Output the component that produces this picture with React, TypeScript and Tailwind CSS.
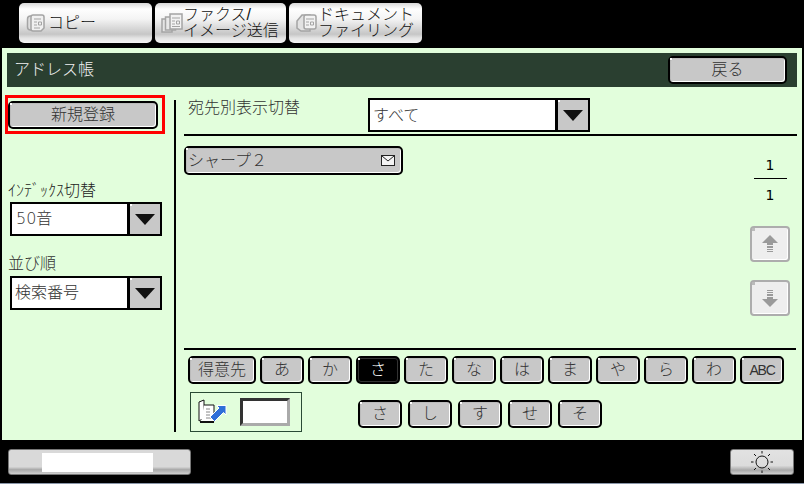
import React from 'react';

const font = "font-['Liberation_Sans','Noto_Sans_CJK_JP',sans-serif] font-light";

const row1 = ['あ', 'か', 'さ', 'た', 'な', 'は', 'ま', 'や', 'ら', 'わ'];
const row2 = ['さ', 'し', 'す', 'せ', 'そ'];

// raised grey button of the panel: black rim, white edge, small corner dot
const GreyButton: React.FC<{ className?: string; children?: React.ReactNode }> = ({ className, children }) => (
  <div className={`relative flex items-center justify-center rounded-[5px] border-2 border-black bg-[#c8c8c8] text-[#333] shadow-[inset_-1px_-1px_0_#fff,inset_1px_1px_0_#bbb] ${className ?? ''}`}>
    <span className="absolute left-0 top-0 h-[2px] w-[2px] bg-white" />
    {children}
  </div>
);

const Key: React.FC<{ label: string; active?: boolean; className?: string }> = ({ label, active, className }) => (
  <GreyButton className={`h-[28px] text-[16px] ${active ? '!bg-black !text-white !shadow-[inset_0_0_0_1px_#333]' : ''} ${className ?? 'w-[44px]'}`}>
    {label}
  </GreyButton>
);

const Dropdown: React.FC<{ label: string; className: string; arrowClass: string; textClass?: string }> = ({ label, className, arrowClass, textClass }) => (
  <div className={`flex border-2 border-black bg-white ${className}`}>
    <div className={`flex flex-1 items-center pl-[3px] text-[16px] text-[#333] ${textClass ?? ''}`}>{label}</div>
    <div className={`relative flex items-center justify-center border-l-[3px] border-black bg-[#c8c8c8] ${arrowClass}`}>
      <span className="absolute left-0 top-0 h-[2px] w-[2px] bg-white" />
      <svg width="20" height="12" viewBox="0 0 20 12"><polygon points="0,1 20,1 10,12" fill="#111" /></svg>
    </div>
  </div>
);

const ScrollButton: React.FC<{ down?: boolean }> = ({ down }) => (
  <div className="relative flex h-[36px] w-[40px] items-center justify-center rounded-[4px] border-2 border-[#adadad] bg-[#eeeeee] shadow-[inset_-1px_-1px_0_#fff]">
    <span className="absolute left-0 top-0 h-[3px] w-[3px] bg-[#bbb]" />
    <svg width="16" height="18" viewBox="0 0 16 18" className={down ? 'rotate-180' : ''}>
      <polygon points="8,0 16,8 11,8 11,10 5,10 5,8 0,8" fill="#9a9a9a" />
      <rect x="5" y="11" width="6" height="2" fill="#9a9a9a" />
      <rect x="5" y="14" width="6" height="1" fill="#9a9a9a" />
      <rect x="5" y="16" width="6" height="1" fill="#9a9a9a" />
    </svg>
  </div>
);

const TabIcon: React.FC<{ pages: number }> = ({ pages }) => (
  <svg width="22" height="20" viewBox="0 0 22 20" className="shrink-0" fill="none" stroke="#a4a4a4" strokeWidth="1.5">
    {pages === 1 && (
      <>
        <rect x="1.500" y="3" width="11" height="14" rx="3" fill="#dedede" />
        <path d="M7 2h9a2 2 0 0 1 2 2v11l-3 3H7a2 2 0 0 1-2-2V4a2 2 0 0 1 2-2z" fill="#f0f0f0" />
        <path d="M8 6h7M8 9h3M12.500 9h3v3h-3zM8 12h3M8 15h6" strokeWidth="1" />
      </>
    )}
    {pages === 2 && (
      <>
        <rect x="1" y="6" width="10" height="13" fill="#e4e4e4" />
        <rect x="4.500" y="4" width="10" height="13" fill="#e8e8e8" />
        <rect x="9" y="1" width="12" height="15" fill="#f2f2f2" />
        <path d="M11 5h8M11 8h3M15.500 8h3v3h-3zM11 11h3M11 13.500h8" strokeWidth="1" />
      </>
    )}
    {pages === 3 && (
      <>
        <path d="M1 8l5-6h8v16H5l-4-3z" fill="#e2e2e2" />
        <rect x="8" y="2" width="12" height="14" rx="2" fill="#f2f2f2" />
        <path d="M10 6h8M10 9h3M14.500 9h3v3h-3zM10 12h3" strokeWidth="1" />
      </>
    )}
  </svg>
);

const Tab: React.FC<{ lines: string[]; pages: number; className: string }> = ({ lines, pages, className }) => (
  <div className={`flex h-[40px] items-center rounded-[5px] bg-[linear-gradient(#d8d8d8_0%,#fefefe_15%,#f4f4f4_40%,#c6c6c6_78%,#e4e4e4_88%,#f4f4f4_100%)] text-[#111] ${className}`}>
    <TabIcon pages={pages} />
    <div className="text-[16px] leading-[16px]">
      {lines.map(l => <div key={l} className="whitespace-nowrap">{l}</div>)}
    </div>
  </div>
);

export default function App() {
  return (
    <div className={`relative flex h-[484px] w-[804px] flex-col overflow-hidden bg-black ${font}`}>
      {/* Top tabs */}
      <div className="flex h-[48px] shrink-0 gap-[3px] pl-[19px] pt-[3px]">
        <Tab lines={['コピー']} pages={1} className="w-[133px] pl-[7px]" />
        <Tab lines={['ファクス/', 'イメージ送信']} pages={2} className="w-[131px] pl-[6px]" />
        <Tab lines={['ドキュメント', 'ファイリング']} pages={3} className="w-[133px] pl-[7px]" />
      </div>

      {/* Main panel */}
      <div className="mx-[2px] flex h-[392px] shrink-0 flex-col bg-[#e2fedc] px-[5px] pt-[5px]">
        <div className="flex h-[34px] shrink-0 items-center justify-between bg-[#2a3f30] pl-[7px] pr-[10px]">
          <span className="text-[16px] text-[#f0f0f0]">アドレス帳</span>
          <GreyButton className="h-[28px] w-[119px] text-[16px]">戻る</GreyButton>
        </div>

        <div className="flex flex-1">
          {/* Left column */}
          <div className="flex w-[167px] shrink-0 flex-col">
            <div className="ml-[-2px] mt-[8px] flex h-[39px] w-[160px] items-center border-[3px] border-[#ff0000]">
              <GreyButton className="h-[28px] w-[150px] text-[16px]">新規登録</GreyButton>
            </div>
            <div className="ml-[1px] mt-[46px] h-[22px] text-[16px] leading-[22px] text-[#222]">ｲﾝﾃﾞｯｸｽ切替</div>
            <Dropdown label="50音" className="ml-[3px] h-[34px] w-[152px] font-['DejaVu_Sans','Noto_Sans_CJK_JP',sans-serif]" arrowClass="w-[33px]" textClass="pl-[4px]" />
            <div className="ml-[1px] mt-[16px] h-[24px] text-[16px] leading-[24px] text-[#333]">並び順</div>
            <Dropdown label="検索番号" className="ml-[3px] h-[34px] w-[152px]" arrowClass="w-[33px]" />
          </div>

          {/* Divider */}
          <div className="mt-[13px] h-[332px] w-[2px] shrink-0 bg-black" />

          {/* Right column */}
          <div className="ml-[8px] flex flex-1 flex-col">
            <div className="flex h-[49px] shrink-0 items-start border-b-2 border-black pt-[11px]">
              <div className="ml-[4px] w-[180px] text-[16px] leading-[20px] text-[#333]">宛先別表示切替</div>
              <Dropdown label="すべて" className="h-[34px] w-[222px]" arrowClass="w-[33px]" textClass="pt-[2px]" />
            </div>

            <div className="flex h-[212px] shrink-0 justify-between pr-[7px]">
              <GreyButton className="mt-[10px] h-[29px] w-[219px] !justify-between pl-[2px] pr-[6px] text-[16px]">
                <span>シャープ２</span>
                <svg width="14" height="11" viewBox="0 0 14 11" className="shrink-0">
                  <rect x="0.5" y="0.5" width="13" height="10" fill="#f4f4f4" stroke="#222" />
                  <path d="M1 1l6 5 6-5" fill="none" stroke="#222" />
                </svg>
              </GreyButton>
              <div className="flex w-[40px] flex-col items-center font-['DejaVu_Sans',sans-serif] font-normal">
                <div className="mt-[21px] text-[14px] leading-[16px] text-black">1</div>
                <div className="mt-[5px] h-[1px] w-[33px] bg-black" />
                <div className="mt-[8px] text-[14px] leading-[16px] text-black">1</div>
                <div className="mt-[23px]"><ScrollButton /></div>
                <div className="mt-[18px]"><ScrollButton down /></div>
              </div>
            </div>

            <div className="h-[2px] w-[612px] shrink-0 bg-black" />

            <div className="ml-[4px] mt-[6px] flex gap-[4px]">
              <Key label="得意先" className="w-[68px]" />
              {row1.map(k => <Key key={k} label={k} active={k === 'さ'} />)}
              <Key label="ABC" className="w-[44px] !text-[14px] tracking-[-1.2px]" />
            </div>

            <div className="ml-[6px] mt-[8px] flex items-start">
              <div className="flex h-[40px] w-[112px] items-center border border-[#2a4a35] pl-[6px]">
                <svg width="30" height="26" viewBox="0 0 30 26" className="shrink-0">
                  <path d="M2 3l5-2v18l-5 3z" fill="#fff" stroke="#111" />
                  <path d="M7 6h10v17H4" fill="#fff" stroke="#111" />
                  <path d="M3 23h14" stroke="#111" strokeWidth="2" />
                  <path d="M9 10h4M9 13h4M9 16h4M9 19h6" stroke="#888" />
                  <path d="M13 18l9-9-2.500-2.500H29V16l-2.500-2.500-9 9z" fill="#2f6fd8" stroke="#fff" />
                </svg>
                <div className="ml-[13px] h-[28px] w-[50px] border-[3px] border-b-[#aaa] border-l-[#333] border-r-[#aaa] border-t-[#333] bg-white" />
              </div>
              <div className="ml-[56px] mt-[8px] flex gap-[6px]">
                {row2.map(k => <Key key={k} label={k} />)}
              </div>
            </div>
          </div>
        </div>
      </div>

      {/* Bottom bar */}
      <div className="flex h-[43px] shrink-0 items-start justify-between pl-[8px] pr-[10px] pt-[9px]">
        <div className="flex h-[26px] w-[183px] justify-center rounded-[3px] border border-[#777] bg-[linear-gradient(#d9d9d9_0%,#d9d9d9_70%,#a8a8a8_82%,#cfcfcf_100%)] pr-[5px] pt-[3px]">
          <div className="h-[19px] w-[111px] bg-white" />
        </div>
        <div className="flex h-[26px] w-[64px] items-center justify-center rounded-[3px] border border-[#777] bg-[linear-gradient(#e2e2e2_0%,#dcdcdc_65%,#a8a8a8_84%,#cfcfcf_100%)]">
          <svg width="22" height="22" viewBox="0 0 22 22" fill="none" stroke="#111">
            <circle cx="11" cy="11" r="6" />
            <path d="M11 0v2.500M11 19.500v2.500M0 11h2.500M19.500 11h2.500M3 3l2 2M17 17l2 2M19 3l-2 2M3 19l2-2" />
          </svg>
        </div>
      </div>
      <div className="absolute bottom-0 left-0 h-[1px] w-full bg-[#8a96a8]" />
    </div>
  );
}
